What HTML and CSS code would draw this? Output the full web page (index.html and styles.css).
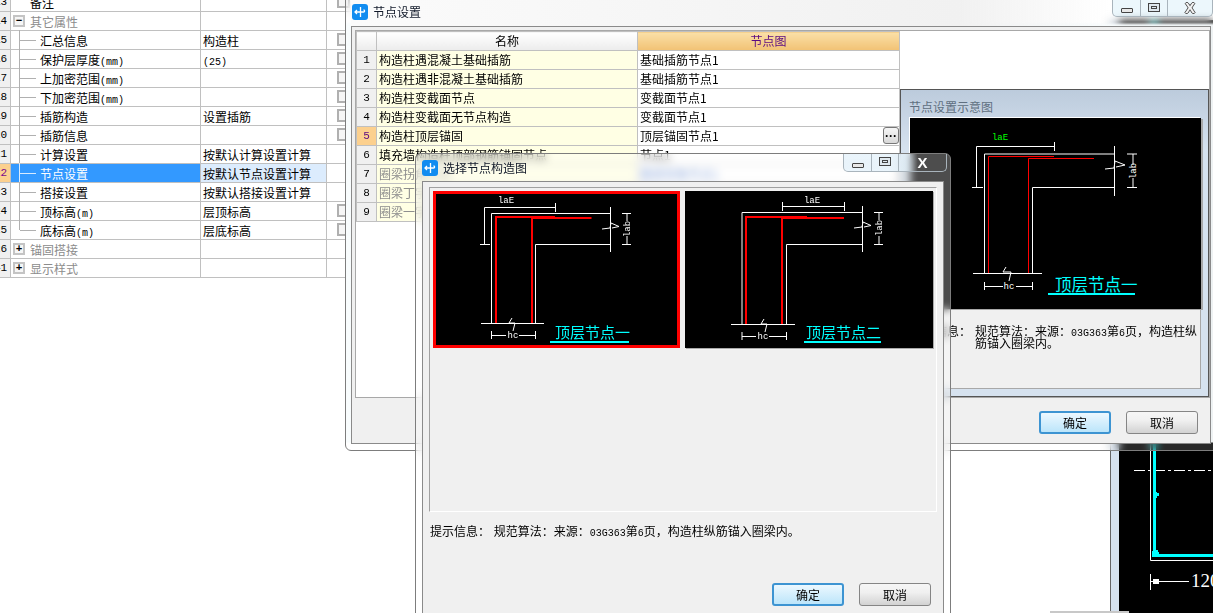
FILE: index.html
```html
<!DOCTYPE html>
<html lang="zh-CN">
<head>
<meta charset="utf-8">
<title>节点设置</title>
<link rel="stylesheet" href="styles.css">
</head>
<body>
<div class="desk">
  <table class="props">
    <colgroup><col class="c-num"><col class="c-name"><col class="c-val"><col class="c-chk"></colgroup>
    <tr><th>13</th><td class="top">备注</td><td></td><td><i class="chk"></i></td></tr>
    <tr><th>14</th><td class="group"><span class="tog">−</span>其它属性</td><td></td><td></td></tr>
    <tr><th>15</th><td class="child">汇总信息</td><td>构造柱</td><td><i class="chk"></i></td></tr>
    <tr><th>16</th><td class="child">保护层厚度<span class="unit">(mm)</span></td><td><span class="unit">(25)</span></td><td><i class="chk"></i></td></tr>
    <tr><th>17</th><td class="child">上加密范围<span class="unit">(mm)</span></td><td></td><td><i class="chk"></i></td></tr>
    <tr><th>18</th><td class="child">下加密范围<span class="unit">(mm)</span></td><td></td><td><i class="chk"></i></td></tr>
    <tr><th>19</th><td class="child">插筋构造</td><td>设置插筋</td><td><i class="chk"></i></td></tr>
    <tr><th>20</th><td class="child">插筋信息</td><td></td><td><i class="chk"></i></td></tr>
    <tr><th>21</th><td class="child">计算设置</td><td>按默认计算设置计算</td><td></td></tr>
    <tr class="sel"><th>22</th><td class="child">节点设置</td><td>按默认节点设置计算</td><td></td></tr>
    <tr><th>23</th><td class="child">搭接设置</td><td>按默认搭接设置计算</td><td></td></tr>
    <tr><th>24</th><td class="child">顶标高<span class="unit">(m)</span></td><td>层顶标高</td><td><i class="chk"></i></td></tr>
    <tr><th>25</th><td class="child last">底标高<span class="unit">(m)</span></td><td>层底标高</td><td><i class="chk"></i></td></tr>
    <tr><th>26</th><td class="group"><span class="tog">+</span>锚固搭接</td><td></td><td></td></tr>
    <tr><th>41</th><td class="group"><span class="tog">+</span>显示样式</td><td></td><td></td></tr>
  </table>

  <div class="cad">
    <svg class="cad-art" width="94" height="593" viewBox="0 0 94 593">
      <path class="w dash" d="M15 450.5H94"/>
      <path class="w" d="M31.5 0V540.5H94"/>
      <path class="cy" d="M35.5 0V535.5H94"/>
      <path class="cyf" d="M35 472H38V473H40V476H38V478H35Z"/>
      <path class="cyf" d="M33 531H36V530H39V532H40V535H39V537H33Z"/>
      <path class="w" d="M31.5 554V570M31.5 561.5H70"/>
      <rect class="wf" x="34" y="559" width="6" height="5"/>
      <text class="num" x="72" y="567">120</text>
    </svg>
  </div>
  <div class="strip"></div>

  <section class="win win1">
    <header class="titlebar">
      <svg class="app" width="16" height="16" viewBox="0 0 16 16"><rect width="16" height="16" rx="3" fill="#118cf0"/><path d="M8.5 3V13M3 8H11.5C13 8 13 6 11.5 6M5 6L3 8L5 10" fill="none" stroke="#fff" stroke-width="1.3"/></svg>
      <span>节点设置</span>
    </header>
    <div class="caps caps1">
      <span class="cap"><i class="g-min"></i></span><span class="cap"><i class="g-max"></i></span><span class="cap cap-x">X</span>
    </div>
    <div class="client">
      <div class="panel">
        <table class="nodes">
          <colgroup><col class="n-num"><col class="n-name"><col class="n-val"></colgroup>
          <tr class="head"><th></th><th>名称</th><th class="on">节点图</th></tr>
          <tr><th>1</th><td class="nm">构造柱遇混凝土基础插筋</td><td>基础插筋节点1</td></tr>
          <tr><th>2</th><td class="nm">构造柱遇非混凝土基础插筋</td><td>基础插筋节点1</td></tr>
          <tr><th>3</th><td class="nm">构造柱变截面节点</td><td>变截面节点1</td></tr>
          <tr><th>4</th><td class="nm">构造柱变截面无节点构造</td><td>变截面节点1</td></tr>
          <tr><th class="on">5</th><td class="nm">构造柱顶层锚固</td><td class="edit">顶层锚固节点1<button class="more">···</button></td></tr>
          <tr><th>6</th><td class="nm">填充墙构造柱顶部钢筋锚固节点</td><td>节点1</td></tr>
          <tr><th>7</th><td class="nm off">圈梁拐角节点</td><td class="bl">圈梁拐角节点1</td></tr>
          <tr><th>8</th><td class="nm off">圈梁丁字节点</td><td class="bl">圈梁丁字节点1</td></tr>
          <tr><th>9</th><td class="nm off">圈梁一字节点</td><td class="bl">圈梁一字节点1</td></tr>
        </table>
        <div class="groupbox">
          <div class="gb-title">节点设置示意图</div>
          <svg class="art preview" width="291" height="191" viewBox="0 0 291 191">
            <path class="w" d="M66.5 69V28.5H145M144.5 24V33M62 69.5H73M74.5 155V36H204.5M204.5 28V78M122.5 155V69.5H204.5M63 155.5H132"/>
            <path class="w soft" d="M195 51L204 50L205 43L215 47L206 49M96 149L93 154H101L99 163"/>
            <path class="w" d="M217 36H227M217 69.5H227M223 36V47M223 60V69.5M74.5 164V172M122.5 164V172M74.5 168.5H93M106 168.5H122.5"/>
            <path class="r thin" d="M78.5 155V38.5H144M118.5 155V40.5H184"/>
            <text class="lb green" x="90" y="22">laE</text>
            <text class="lb" x="99" y="171">hc</text>
            <text class="lb" transform="translate(226 53) rotate(-90)">lab</text>
            <text class="ttl big" x="145" y="173">顶层节点一</text>
            <rect class="cyf" x="138" y="175" width="87" height="2"/>
          </svg>
          <div class="gb-tip"><span class="tip-l">提示信息：</span><span class="tip-t">规范算法：来源：<span class="lat">03G363</span>第<span class="lat">6</span>页，构造柱纵<br>筋锚入圈梁内。</span></div>
        </div>
      </div>
      <div class="foot">
        <button class="btn pri">确定</button><button class="btn">取消</button>
      </div>
    </div>
  </section>

  <section class="win win2">
    <header class="titlebar">
      <svg class="app" width="16" height="16" viewBox="0 0 16 16"><rect width="16" height="16" rx="3" fill="#118cf0"/><path d="M8.5 3V13M3 8H11.5C13 8 13 6 11.5 6M5 6L3 8L5 10" fill="none" stroke="#fff" stroke-width="1.3"/></svg>
      <span>选择节点构造图</span>
    </header>
    <div class="caps caps2">
      <span class="cap"><i class="g-min"></i></span><span class="cap"><i class="g-max"></i></span><span class="cap cap-x">X</span>
    </div>
    <div class="client2">
      <div class="listbox">
        <svg class="art thumb" width="247" height="157" viewBox="0 0 247 157">
          <path class="w" d="M51.5 53V16.5H122.5M122.5 12V21M47 53.5H57M58.5 132V22.5H177M177.5 16V61M102.5 132V53.5H177M48 132.5H111"/>
          <path class="w soft" d="M169 38L177 37L178 32L186 35.5L179 37M79 127L76 132H82L80 140"/>
          <path class="w" d="M189 22.5H198M189 53.5H198M194 22.5V30M194 45V53.5M58.5 140V148M102.5 140V148M58.5 144.5H73M86 144.5H102.5"/>
          <path class="r" d="M63 132V26H122M99 132V27H158.5"/>
          <text class="lb" x="73" y="12">laE</text>
          <text class="lb" x="80" y="147">hc</text>
          <text class="lb" transform="translate(197 38) rotate(-90)">lab</text>
          <text class="ttl" x="122" y="147">顶层节点一</text>
          <rect class="cyf" x="117" y="150" width="79" height="2"/>
          <rect class="sel-box" x="1.5" y="1.5" width="244" height="154"/>
        </svg>
        <svg class="art thumb grey" width="248" height="157" viewBox="0 0 248 157">
          <path class="w" d="M97.5 15.5H159.5M97.5 11V20M159.5 11V20M57 133V21.5H177.5M177.5 15V61M101.5 133V53.5H177M46 133.5H110"/>
          <path class="w soft" d="M169 37L177 36L178 31L186 34.5L179 36M79 128L76 133H82L80 141"/>
          <path class="w" d="M189 21.5H198M189 53.5H198M194 21.5V29M194 45V53.5M57 141V149M101.5 141V149M57 145.5H71M84 145.5H101.5"/>
          <path class="r" d="M61 133V26H122M97 133V27H159"/>
          <text class="lb" x="127" y="12">laE</text>
          <text class="lb" x="78" y="148">hc</text>
          <text class="lb" transform="translate(197 37) rotate(-90)">lab</text>
          <text class="ttl" x="121" y="147">顶层节点二</text>
          <rect class="cyf" x="119" y="150" width="77" height="2"/>
        </svg>
      </div>
      <p class="tip2">提示信息： 规范算法：来源：<span class="lat">03G363</span>第<span class="lat">6</span>页，构造柱纵筋锚入圈梁内。</p>
      <div class="foot2">
        <button class="btn pri">确定</button><button class="btn">取消</button>
      </div>
    </div>
  </section>
  <div class="edgebar"></div>
</div>
</body>
</html>
```

FILE: styles.css
```css
* { box-sizing: border-box; }
html, body { margin: 0; padding: 0; background: #fff; }
body, button, table {
  font-family: "Noto Sans CJK SC", "Liberation Sans", sans-serif;
  font-size: 12px;
  color: #000;
}
.desk { position: relative; width: 1213px; height: 613px; overflow: hidden; background: #fff; }

/* property table behind the dialogs */
.props {
  table-layout: fixed;
  border-collapse: collapse;
  width: 370px;
  margin: -8px 0 0 -10px;
}
.c-num { width: 20px; }
.c-name { width: 190px; }
.c-val { width: 126px; }
.c-chk { width: 34px; }
.props tr { height: 19px; }
.props th, .props td {
  border: 1px solid #c0c0c0;
  padding: 0;
  height: 19px;
  line-height: 17px;
  white-space: nowrap;
  overflow: hidden;
  font-weight: 400;
}
.props th { background: #f0f0f0; font-family: "Liberation Mono", monospace; font-size: 11px; }
.props td { padding-left: 2px; position: relative; }
.props td.top { padding-left: 19px; }
.props td.group { padding-left: 19px; color: #8c8c8c; }
.tog {
  position: absolute; left: 2px; top: 3px;
  width: 12px; height: 12px;
  border: 2px solid #c4c4c4;
  background: #f6f6f6;
  color: #000;
  font: 700 11px/8px "Liberation Mono", monospace;
  text-align: center;
}
.props td.child { padding-left: 29px; overflow: visible; }
.child::before {
  content: ""; position: absolute; left: 8px; top: -1px; bottom: -1px;
  border-left: 1px solid #b0b0b0;
}
.child::after {
  content: ""; position: absolute; left: 9px; top: 9px; width: 16px;
  border-top: 1px solid #b0b0b0;
}
.child.last::before { bottom: 9px; }
.unit { font-family: "Liberation Mono", monospace; font-size: 10px; line-height: 0; }
.lat { font-family: "Liberation Mono", monospace; font-size: 10px; line-height: 0; }
.chk {
  position: absolute; left: 10px; top: 2px;
  width: 13px; height: 13px;
  border: 2px solid #b0b0b0;
  background: #f6f6f6;
}
.props .sel td:nth-child(2) { background: #3399ff; color: #fff; }
.props .sel td:nth-child(3) { background: #dcecfd; }
.props .sel th { background: #fcd08e; color: #7a0a8c; }
.props .sel .child::before, .props .sel .child::after { border-color: #d8ebff; }

/* CAD view on the right */
.cad {
  position: absolute; left: 1119px; top: 20px; width: 94px; height: 593px;
  background: #000;
}
.cad-art { display: block; }
.strip {
  position: absolute; left: 1110px; top: 20px; width: 9px; height: 593px;
  background: #d6e2ef; border-left: 1px solid #666;
}
.edgebar {
  position: absolute; left: 1050px; top: 611px; width: 79px; height: 2px;
  background: #c8c8c8;
}
.w { fill: none; stroke: #fff; stroke-width: 1; }
.cad-art .dash { stroke-dasharray: 11 3 3 3; }
.r { fill: none; stroke: #f00; stroke-width: 2; }
.r.thin { stroke-width: 1; }
.cy { fill: none; stroke: #0ff; stroke-width: 3; }
.cyf { fill: #0ff; }
.wf { fill: #fff; }
.num { font: 19px "Liberation Serif", serif; fill: #fff; }

/* windows */
.win {
  position: absolute;
  border: 1px solid #7d7d7d;
  border-radius: 6px;
  -webkit-backdrop-filter: blur(4px);
  backdrop-filter: blur(4px);
}
.titlebar {
  display: flex; align-items: center; gap: 5px;
  line-height: 16px;
  color: #101828;
}
.app { display: block; flex: none; }
.win1 {
  left: 345px; top: -6px; width: 880px; height: 457px;
  background: linear-gradient(rgba(255,255,255,.18) 27px, rgba(248,252,253,.96) 30px, rgba(248,252,253,.96) calc(100% - 8px), rgba(255,255,255,.16) calc(100% - 7px));
  padding: 0 5px;
}
.win1 .titlebar {
  height: 31px; width: 760px; padding: 2px 0 0 1px;
  background: linear-gradient(90deg, #fbfbfb, #f1f1f1 80%, rgba(255,255,255,0));
}
.client {
  border: 1px solid #8a8a8a;
  width: 860px;
  height: 418px;
  background: #f0f0f0;
  display: flex; flex-direction: column;
  padding: 3px 0 0 3px;
}
.panel {
  display: flex;
  height: 368px;
  border: 1px solid #a8a8a8;
  background: #fff;
}
.nodes {
  table-layout: fixed;
  border-collapse: collapse;
  width: 543px;
  height: 191px;
  margin-bottom: auto;
  flex: none;
}
.n-num { width: 20px; }
.n-name { width: 261px; }
.n-val { width: 262px; }
.nodes tr { height: 19px; }
.nodes th, .nodes td {
  border: 1px solid #c0c0c0;
  padding: 0 0 1px 2px;
  height: 19px;
  line-height: 16px;
  white-space: nowrap;
  overflow: hidden;
  font-weight: 400;
}
.nodes th { background: #f0f0f0; text-align: center; padding: 0; font-family: "Liberation Mono", "Noto Sans CJK SC", monospace; font-size: 11px; }
.nodes .head th { background: linear-gradient(#fff, #ececec); font-family: "Noto Sans CJK SC", sans-serif; font-size: 12px; }
.nodes .head th.on { background: linear-gradient(#fbe0a8, #f2c274); color: #5a0a82; }
.nodes th.on { background: #fcd08e; color: #5a0a82; }
.nm { background: #ffffe4; }
.nm.off { color: #8c8c8c; }
.bl { color: #5f86cf; }
.edit { position: relative; }
.more {
  position: absolute; right: 0; top: 0;
  width: 16px; height: 17px; padding: 0;
  border: 1px solid #777; border-radius: 3px;
  background: linear-gradient(#f6f6f6, #d8d8d8);
  font: 700 12px/12px "Liberation Sans", sans-serif;
}
.groupbox {
  flex: 1;
  margin: 58px 0 0;
  border: 1px solid #555;
  background: linear-gradient(#bccbdc, #d6e2ef 60px);
  padding: 0 7px 7px 9px;
  display: flex; flex-direction: column;
}
.gb-title { flex: none; height: 28px; line-height: 34px; color: #5f6f80; margin-left: -1px; }
.art { display: block; background: #000; flex: none; }
.preview { box-shadow: -1px -1px 0 #fff, 2px 1px 0 #a8a8a8; }
.gb-tip {
  flex: 1; display: flex; margin-top: 1px;
  background: #f0f0f0;
  border: 1px solid #a8a8a8; border-top: 0;
  padding-top: 15px;
  line-height: 12px;
}
.tip-l { width: 64px; flex: none; }
.tip-t { white-space: nowrap; }
.foot {
  flex: 1; display: flex; justify-content: flex-end; align-items: flex-start; gap: 15px;
  padding: 13px 12px 0 0;
}
.btn {
  width: 72px; height: 23px; padding: 0;
  border: 1px solid #858585; border-radius: 3px;
  background: linear-gradient(#f6f6f6, #f0f0f0 40%, #d2d2d2);
  line-height: 19px;
}
.btn.pri {
  border: 2px solid #3d94d2;
  background: linear-gradient(#ecf8ff, #bce5fa);
}
.caps {
  position: absolute; display: flex; height: 17px;
  border: 1px solid #a9b4bc; border-top: 0;
  border-radius: 0 0 5px 5px;
  background: rgba(220,240,250,.55);
}
.cap { display: flex; align-items: center; justify-content: center; border-right: 1px solid #a9b4bc; width: 27px; }
.cap:first-child { width: 28px; }
.cap-x {
  flex: 1; border: 0;
  font: 700 15px/14px "Liberation Sans", sans-serif;
  color: #f4f4f4;
  text-shadow: 1px 0 0 #555, -1px 0 0 #555, 0 1px 0 #555, 0 -1px 0 #555;
}
.g-min { display: block; width: 12px; height: 5px; border: 1px solid #444; background: #e8e8e8; border-radius: 1px; margin-top: 5px; }
.g-max { display: block; width: 12px; height: 9px; border: 1px solid #444; background: #dfe8ee; box-shadow: inset 0 0 0 2px #dfe8ee, inset 0 0 0 3px #444; margin-top: -2px; }
.caps1 { left: 766px; top: 5px; width: 101px; }
.win2 {
  left: 415px; top: 153px; width: 536px; height: 480px;
  background: rgba(255,255,255,.3);
  padding: 0 6px;
}
.win2 .titlebar { height: 27px; }
.caps2 {
  left: 427px; top: 0; width: 104px; height: 18px;
  background: linear-gradient(90deg, rgba(225,240,250,.7) 60%, rgba(225,240,250,0) 72%);
}
.caps2 .cap-x { text-shadow: none; color: #fff; }
.client2 {
  border: 1px solid #8a8a8a;
  height: 460px;
  background: #f0f0f0;
  padding: 5px 6px;
}
.listbox {
  height: 325px;
  border: 1px solid #a0a0a0; border-right-color: #fff; border-bottom-color: #fff;
  padding: 3px;
  display: flex; gap: 5px;
  align-items: flex-start;
}
.sel-box { fill: none; stroke: #f00; stroke-width: 3; }
.grey { box-shadow: 1px 1px 0 #aaa; }
.lb { font: 9px "Liberation Mono", monospace; fill: #fff; text-anchor: middle; }
.green { fill: #0f0; }
.ttl { font: 15px "Noto Sans CJK SC", sans-serif; fill: #0ff; }
.big { font-size: 16.5px; }
.tip2 { margin: 12px 0 0 1px; line-height: 14px; word-spacing: 1px; }
.foot2 { display: flex; justify-content: flex-end; gap: 15px; margin-top: 45px; padding-right: 6px; }
```
